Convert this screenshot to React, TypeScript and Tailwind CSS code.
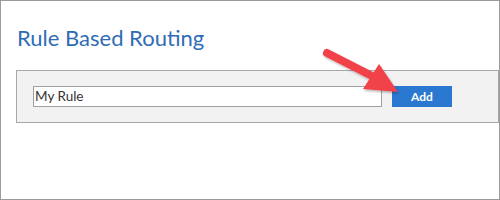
import React from "react";

export default function App() {
  return (
    <div className="relative w-[500px] h-[200px] bg-white border border-[#9a9a9a] box-border" style={{ fontFamily: "Lato, 'Open Sans', sans-serif" }}>
      <h1 className="pl-[16px] pt-[23px] text-[22px] leading-[28px] text-[#2f6cb5] font-normal">Rule Based Routing</h1>
      <div className="ml-[15px] mt-[18px] h-[53px] bg-[#f2f2f2] border border-[#a8a8a8] flex items-center pl-[16px] gap-[10px]">
        <div className="w-[349px] h-[21px] bg-white border border-[#a0a0a0] flex items-center pl-[1px] text-[13.5px] text-[#333]">My Rule</div>
        <button className="w-[60px] h-[21px] bg-[#2a78d0] text-white text-[12px] font-bold flex items-center justify-center">Add</button>
      </div>
      <svg className="absolute left-0 top-0 pointer-events-none" width="500" height="200" viewBox="0 0 500 200">
        <defs>
          <filter id="sh" x="-20%" y="-20%" width="140%" height="140%">
            <feDropShadow dx="1" dy="1.5" stdDeviation="1.2" floodColor="#000" floodOpacity="0.3" />
          </filter>
        </defs>
        <g filter="url(#sh)" fill="#f2424a">
          <line x1="326" y1="52" x2="375" y2="77" stroke="#f2424a" strokeWidth="8" strokeLinecap="round" />
          <polygon points="378,63 397,91 362,88" />
        </g>
      </svg>
    </div>
  );
}
